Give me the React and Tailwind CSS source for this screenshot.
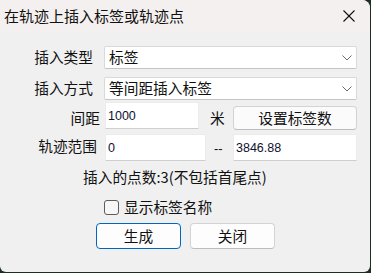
import React from 'react';

const cjk = { fontFamily: '"Noto Sans CJK SC", "Noto Sans", sans-serif' };

const Chevron = () => (
  <svg width="10" height="6" viewBox="0 0 10 6" className="shrink-0">
    <polyline points="0.5,0.5 5,5 9.5,0.5" fill="none" stroke="#6a6a6a" strokeWidth="1" />
  </svg>
);

const Select = ({ value }) => (
  <div className="ml-[11px] w-[253px] h-[23px] bg-white border border-[#d9d9d9] border-b-[#c4c4c4] rounded-[2px] flex items-center justify-between pl-[4px] pr-[4px]">
    <span className="text-[14.7px] leading-none text-[#111]">{value}</span>
    <Chevron />
  </div>
);

const TextBox = ({ value, className }) => (
  <div className={`h-[27px] bg-white border border-[#ececec] border-b-[#cfcfcf] pl-[2px] pt-[4px] ${className}`}>
    <span
      className="text-[12.5px] leading-[14px] text-[#101030]"
      style={{ fontFamily: '"Liberation Sans", Arial, sans-serif' }}
    >
      {value}
    </span>
  </div>
);

export default function App() {
  return (
    <div className="w-[371px] h-[273px] bg-[#1c2f21]" style={cjk}>
      <div className="w-[370px] h-[272px] bg-[#f0f0f0] rounded-tr-[8px] rounded-b-[6px] overflow-hidden flex flex-col text-[#111]">
        {/* Title bar */}
        <div className="h-[31px] bg-[#f4f0ef] flex items-center justify-between pl-[4px] pr-[15px]">
          <span className="text-[15px] leading-none">在轨迹上插入标签或轨迹点</span>
          <svg width="12" height="12" viewBox="0 0 12 12">
            <line x1="0.5" y1="0.5" x2="11.5" y2="11.5" stroke="#111" strokeWidth="1.1" />
            <line x1="11.5" y1="0.5" x2="0.5" y2="11.5" stroke="#111" strokeWidth="1.1" />
          </svg>
        </div>

        {/* Body */}
        <div className="flex flex-col text-[14.7px] leading-none">
          <div className="mt-[15px] h-[23px] flex items-center">
            <div className="w-[93px] text-right">插入类型</div>
            <Select value="标签" />
          </div>

          <div className="mt-[8px] h-[23px] flex items-center">
            <div className="w-[93px] text-right">插入方式</div>
            <Select value="等间距插入标签" />
          </div>

          <div className="mt-[2px] h-[28px] flex items-start">
            <div className="w-[100px] text-right mt-[9px]">间距</div>
            <TextBox value="1000" className="ml-[5px] w-[94px]" />
            <div className="ml-[11px] w-[13px] mt-[9px]">米</div>
            <button className="ml-[10px] mt-[4px] w-[124px] h-[24px] bg-[#fbfbfb] border border-[#d3d3d3] border-b-[#bdbdbd] rounded-[4px] flex items-center justify-center">
              设置标签数
            </button>
          </div>

          <div className="mt-[4px] h-[27px] flex items-start">
            <div className="w-[97px] text-right mt-[5px]">轨迹范围</div>
            <TextBox value="0" className="ml-[8px] w-[101px]" />
            <div className="ml-[8px] w-[19px] mt-[8px] text-[13px]" style={{ fontFamily: '"Liberation Sans", Arial, sans-serif' }}>--</div>
            <TextBox value="3846.88" className="w-[124px]" />
          </div>

          <div className="mt-[7px] pl-[83px] h-[18px] flex items-center">插入的点数:3(不包括首尾点)</div>

          <div className="mt-[14px] pl-[104px] flex items-center">
            <div className="w-[15px] h-[15px] rounded-[3px] border border-[#5c5c5c] bg-[#f7f7f7]" />
            <span className="ml-[5px]">显示标签名称</span>
          </div>

          <div className="mt-[8px] pl-[96px] flex gap-[9px]">
            <button className="w-[85px] h-[26px] bg-[#fdfdfd] border border-[#0067c0] rounded-[4px] flex items-center justify-center">
              生成
            </button>
            <button className="w-[85px] h-[26px] bg-[#fdfdfd] border border-[#d3d3d3] border-b-[#bdbdbd] rounded-[4px] flex items-center justify-center">
              关闭
            </button>
          </div>
        </div>
      </div>
    </div>
  );
}
